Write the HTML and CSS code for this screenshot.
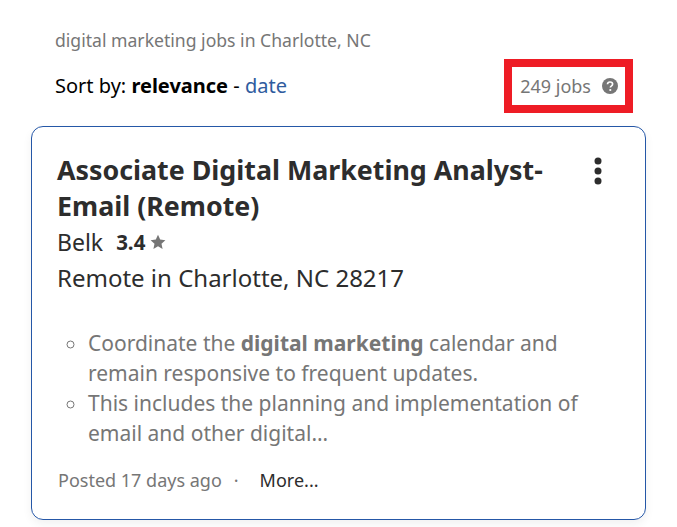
FILE: index.html
```html
<!DOCTYPE html>
<html lang="en">
<head>
<meta charset="utf-8">
<title>digital marketing jobs in Charlotte, NC</title>
<link rel="stylesheet" href="styles.css">
</head>
<body>
<main class="page">
  <p class="query">digital marketing jobs in Charlotte, NC</p>
  <div class="sort-row">
    <p class="sort">Sort by: <b>relevance</b> - <a class="sort-link" href="#">date</a></p>
    <div class="count">
      <span>249 jobs</span>
      <svg class="help" viewBox="0 0 16 16" width="16" height="16" aria-hidden="true"><circle cx="8" cy="8" r="8" fill="#767676"/><path d="M5.5 6.2C5.6 4.8 6.6 4 8 4c1.5 0 2.6.9 2.6 2.1 0 1-.5 1.5-1.3 2-.7.5-.9.8-.9 1.4" fill="none" stroke="#fff" stroke-width="1.7"/><circle cx="8.3" cy="12" r="1.1" fill="#fff"/></svg>
    </div>
  </div>
  <article class="card">
    <div class="title-row">
      <h2 class="title">Associate Digital Marketing Analyst-Email (Remote)</h2>
      <svg class="menu" viewBox="0 0 8 28" width="8" height="28" aria-hidden="true"><circle cx="4" cy="4" r="3.5"/><circle cx="4" cy="14" r="3.5"/><circle cx="4" cy="24" r="3.5"/></svg>
    </div>
    <div class="company-row">
      <span class="company">Belk</span>
      <b class="rating">3.4</b>
      <svg class="star" viewBox="0 0 16 16" width="16" height="16" aria-hidden="true"><path d="M8 .8l2.2 4.8 5.2.6-3.9 3.5 1.1 5.2L8 12.3l-4.6 2.6 1.1-5.2L.6 6.2l5.2-.6z" fill="#767676"/></svg>
    </div>
    <p class="location">Remote in Charlotte, NC 28217</p>
    <ul class="snippet">
      <li>Coordinate the <b>digital marketing</b> calendar and remain responsive to frequent updates.</li>
      <li>This includes the planning and implementation of email and other digital…</li>
    </ul>
    <div class="meta">
      <span class="posted">Posted 17 days ago</span>
      <span class="dot">·</span>
      <a class="more" href="#">More...</a>
    </div>
  </article>
</main>
</body>
</html>
```
FILE: styles.css
```css
* { box-sizing: border-box; }
html, body { margin: 0; padding: 0; background: #fff; }
body {
  font-family: "Noto Sans", sans-serif;
  color: #2d2d2d;
  width: 677px;
  height: 527px;
  overflow: hidden;
}
.page { padding: 26px 31px 0; }
.query {
  margin: 0 0 0 24px;
  font-size: 17.6px;
  line-height: 28px;
  color: #767676;
}
.sort-row {
  display: flex;
  justify-content: space-between;
  align-items: center;
  margin: 5px 13px 13px 24px;
}
.sort { margin: 0; font-size: 20px; line-height: 28px; color: #000; }
.sort-link { color: #2f5c9e; text-decoration: none; }
.count {
  display: flex;
  align-items: center;
  gap: 11px;
  height: 54px;
  padding: 0 7px 0 8px;
  border: 8px solid #ee1c25;
  font-size: 18px;
  color: #767676;
}
.card {
  width: 615px;
  height: 394px;
  padding: 25px 25px 0;
  border: 1px solid #2557a7;
  border-radius: 12px;
  box-shadow: 0 4px 10px rgba(0,0,0,.06);
}
.title-row { display: flex; justify-content: space-between; align-items: flex-start; }
.title {
  margin: 0;
  width: 510px;
  font-size: 26.8px;
  line-height: 36px;
  font-weight: 700;
  color: #2d2d2d;
}
.menu { fill: #2d2d2d; margin: 5px 18px 0 0; }
.company-row { display: flex; align-items: center; height: 36px; }
.company { font-size: 23px; }
.rating { font-size: 20.5px; margin-left: 13px; }
.star { margin-left: 5px; }
.location { margin: 0; font-size: 24px; line-height: 36px; }
.snippet {
  margin: 32px 0 0;
  padding: 0 0 0 31px;
  list-style: circle;
  font-size: 21px;
  line-height: 30px;
  color: #767676;
  width: 540px;
}
.meta { display: flex; align-items: center; margin-top: 17px; margin-left: 1px; font-size: 18px; line-height: 30px; color: #767676; }
.dot { margin-left: 12px; }
.more { margin-left: 21px; color: #2d2d2d; text-decoration: none; }
```
